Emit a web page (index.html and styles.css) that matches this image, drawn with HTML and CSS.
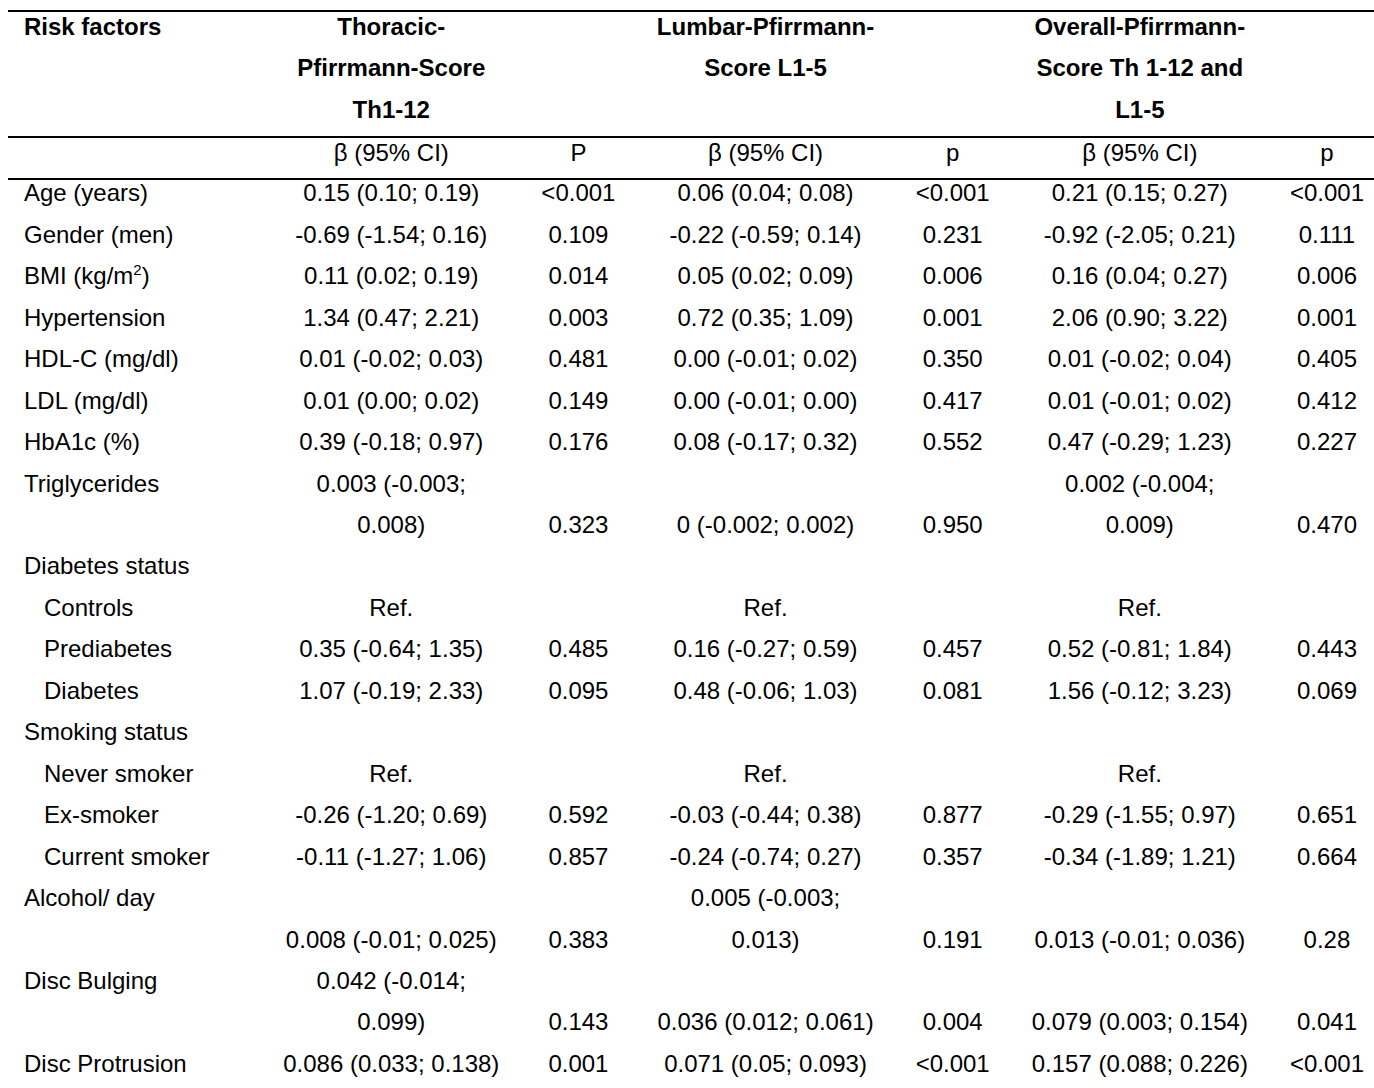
FILE: index.html
```html
<!DOCTYPE html>
<html lang="en">
<head>
<meta charset="utf-8">
<title>Risk factors and Pfirrmann scores</title>
<link rel="stylesheet" href="styles.css">
</head>
<body>
<table class="tbl">
  <colgroup>
    <col class="c-lbl">
    <col class="c-beta">
    <col class="c-p">
    <col class="c-beta">
    <col class="c-p">
    <col class="c-beta">
    <col class="c-p">
  </colgroup>
  <thead>
    <tr class="head">
      <td class="lbl"><span>Risk factors</span></td>
      <td><span>Thoracic-<br>Pfirrmann-Score<br>Th1-12</span></td>
      <td></td>
      <td><span>Lumbar-Pfirrmann-<br>Score L1-5</span></td>
      <td></td>
      <td><span>Overall-Pfirrmann-<br>Score Th 1-12 and<br>L1-5</span></td>
      <td></td>
    </tr>
    <tr class="subhead">
      <td class="lbl"></td>
      <td><span>β (95% CI)</span></td>
      <td><span>P</span></td>
      <td><span>β (95% CI)</span></td>
      <td><span>p</span></td>
      <td><span>β (95% CI)</span></td>
      <td><span>p</span></td>
    </tr>
  </thead>
  <tbody class="body">
    <tr><td class="lbl"><span>Age (years)</span></td><td><span>0.15 (0.10; 0.19)</span></td><td><span>&lt;0.001</span></td><td><span>0.06 (0.04; 0.08)</span></td><td><span>&lt;0.001</span></td><td><span>0.21 (0.15; 0.27)</span></td><td><span>&lt;0.001</span></td></tr>
    <tr><td class="lbl"><span>Gender (men)</span></td><td><span>-0.69 (-1.54; 0.16)</span></td><td><span>0.109</span></td><td><span>-0.22 (-0.59; 0.14)</span></td><td><span>0.231</span></td><td><span>-0.92 (-2.05; 0.21)</span></td><td><span>0.111</span></td></tr>
    <tr><td class="lbl"><span>BMI (kg/m<sup>2</sup>)</span></td><td><span>0.11 (0.02; 0.19)</span></td><td><span>0.014</span></td><td><span>0.05 (0.02; 0.09)</span></td><td><span>0.006</span></td><td><span>0.16 (0.04; 0.27)</span></td><td><span>0.006</span></td></tr>
    <tr><td class="lbl"><span>Hypertension</span></td><td><span>1.34 (0.47; 2.21)</span></td><td><span>0.003</span></td><td><span>0.72 (0.35; 1.09)</span></td><td><span>0.001</span></td><td><span>2.06 (0.90; 3.22)</span></td><td><span>0.001</span></td></tr>
    <tr><td class="lbl"><span>HDL-C (mg/dl)</span></td><td><span>0.01 (-0.02; 0.03)</span></td><td><span>0.481</span></td><td><span>0.00 (-0.01; 0.02)</span></td><td><span>0.350</span></td><td><span>0.01 (-0.02; 0.04)</span></td><td><span>0.405</span></td></tr>
    <tr><td class="lbl"><span>LDL (mg/dl)</span></td><td><span>0.01 (0.00; 0.02)</span></td><td><span>0.149</span></td><td><span>0.00 (-0.01; 0.00)</span></td><td><span>0.417</span></td><td><span>0.01 (-0.01; 0.02)</span></td><td><span>0.412</span></td></tr>
    <tr><td class="lbl"><span>HbA1c (%)</span></td><td><span>0.39 (-0.18; 0.97)</span></td><td><span>0.176</span></td><td><span>0.08 (-0.17; 0.32)</span></td><td><span>0.552</span></td><td><span>0.47 (-0.29; 1.23)</span></td><td><span>0.227</span></td></tr>
    <tr><td class="lbl"><span>Triglycerides</span></td><td><span>0.003 (-0.003;<br>0.008)</span></td><td><span>0.323</span></td><td><span>0 (-0.002; 0.002)</span></td><td><span>0.950</span></td><td><span>0.002 (-0.004;<br>0.009)</span></td><td><span>0.470</span></td></tr>
    <tr><td class="lbl"><span>Diabetes status</span></td><td></td><td></td><td></td><td></td><td></td><td></td></tr>
    <tr><td class="lbl sub"><span>Controls</span></td><td><span>Ref.</span></td><td></td><td><span>Ref.</span></td><td></td><td><span>Ref.</span></td><td></td></tr>
    <tr><td class="lbl sub"><span>Prediabetes</span></td><td><span>0.35 (-0.64; 1.35)</span></td><td><span>0.485</span></td><td><span>0.16 (-0.27; 0.59)</span></td><td><span>0.457</span></td><td><span>0.52 (-0.81; 1.84)</span></td><td><span>0.443</span></td></tr>
    <tr><td class="lbl sub"><span>Diabetes</span></td><td><span>1.07 (-0.19; 2.33)</span></td><td><span>0.095</span></td><td><span>0.48 (-0.06; 1.03)</span></td><td><span>0.081</span></td><td><span>1.56 (-0.12; 3.23)</span></td><td><span>0.069</span></td></tr>
    <tr><td class="lbl"><span>Smoking status</span></td><td></td><td></td><td></td><td></td><td></td><td></td></tr>
    <tr><td class="lbl sub"><span>Never smoker</span></td><td><span>Ref.</span></td><td></td><td><span>Ref.</span></td><td></td><td><span>Ref.</span></td><td></td></tr>
    <tr><td class="lbl sub"><span>Ex-smoker</span></td><td><span>-0.26 (-1.20; 0.69)</span></td><td><span>0.592</span></td><td><span>-0.03 (-0.44; 0.38)</span></td><td><span>0.877</span></td><td><span>-0.29 (-1.55; 0.97)</span></td><td><span>0.651</span></td></tr>
    <tr><td class="lbl sub"><span>Current smoker</span></td><td><span>-0.11 (-1.27; 1.06)</span></td><td><span>0.857</span></td><td><span>-0.24 (-0.74; 0.27)</span></td><td><span>0.357</span></td><td><span>-0.34 (-1.89; 1.21)</span></td><td><span>0.664</span></td></tr>
    <tr><td class="lbl"><span>Alcohol/ day</span></td><td><span>0.008 (-0.01; 0.025)</span></td><td><span>0.383</span></td><td><span>0.005 (-0.003;<br>0.013)</span></td><td><span>0.191</span></td><td><span>0.013 (-0.01; 0.036)</span></td><td><span>0.28</span></td></tr>
    <tr><td class="lbl"><span>Disc Bulging</span></td><td><span>0.042 (-0.014;<br>0.099)</span></td><td><span>0.143</span></td><td><span>0.036 (0.012; 0.061)</span></td><td><span>0.004</span></td><td><span>0.079 (0.003; 0.154)</span></td><td><span>0.041</span></td></tr>
    <tr><td class="lbl"><span>Disc Protrusion</span></td><td><span>0.086 (0.033; 0.138)</span></td><td><span>0.001</span></td><td><span>0.071 (0.05; 0.093)</span></td><td><span>&lt;0.001</span></td><td><span>0.157 (0.088; 0.226)</span></td><td><span>&lt;0.001</span></td></tr>
  </tbody>
</table>
</body>
</html>
```

FILE: styles.css
```css
html, body {
  margin: 0;
  padding: 0;
  background: #ffffff;
  color: #000000;
  font-family: "Liberation Sans", Arial, Helvetica, sans-serif;
  font-size: 24px;
  overflow: hidden;
}

.tbl {
  margin: 10px 0 0 8px;
  width: 1366px;
  table-layout: fixed;
  border-collapse: separate;
  border-spacing: 0;
}

.c-lbl { width: 243px; }
.c-beta { width: 280px; }
.c-p { width: 94px; }

.tbl td {
  padding: 0;
  text-align: center;
  white-space: nowrap;
  vertical-align: bottom;
  line-height: 41.45px;
}

.tbl td.lbl {
  text-align: left;
  padding-left: 16px;
  vertical-align: top;
}

.tbl td.sub {
  padding-left: 36px;
}

.head td {
  font-weight: bold;
  vertical-align: top;
  border-top: 2px solid #000;
  border-bottom: 2px solid #000;
}

.head span {
  vertical-align: 6px;
  line-height: 24px;
}

.subhead td {
  line-height: 40px;
  border-bottom: 2px solid #000;
}

.subhead span {
  vertical-align: 5px;
  line-height: 24px;
}

.body span {
  vertical-align: 8px;
  line-height: 24px;
}

sup {
  font-size: 15px;
  line-height: 0;
}
```
